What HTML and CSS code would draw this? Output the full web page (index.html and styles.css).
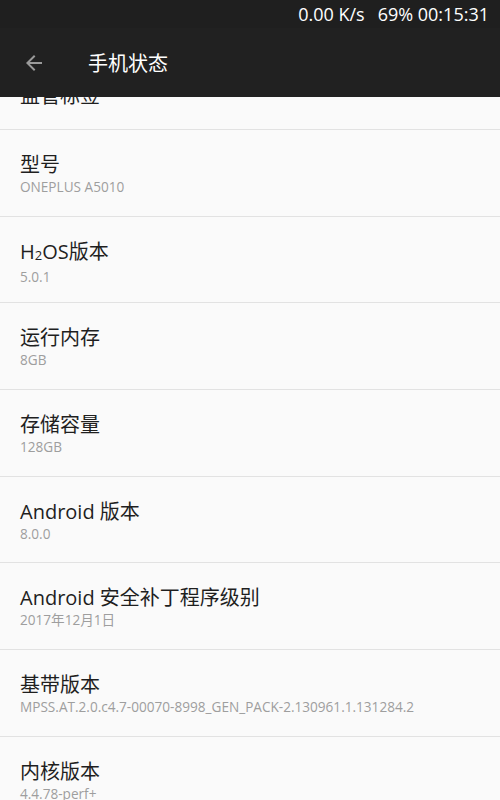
FILE: index.html
```html
<!DOCTYPE html>
<html lang="zh-CN">
<head>
    <meta charset="UTF-8">
    <meta name="viewport" content="width=device-width, initial-scale=1.0">
    <title>手机状态</title>
    <link rel="stylesheet" href="styles.css">
</head>
<body>
    <!-- Barra de estado -->
    <div class="barra-estado">
        <span class="velocidad">0.00 K/s</span>
        <span>69% 00:15:31</span>
    </div>

    <!-- Barra de título -->
    <div class="barra-titulo">
        <svg class="icono-atras" viewBox="0 0 24 24" width="24" height="24">
            <path d="M20 11H7.83l5.59-5.59L12 4l-8 8 8 8 1.41-1.41L7.83 13H20v-2z"/>
        </svg>
        <h1 class="titulo">手机状态</h1>
    </div>

    <!-- Lista de información -->
    <div class="lista">
        <div class="fila fila-cortada">
            <div class="fila-titulo">监管标签</div>
        </div>
        <div class="fila">
            <div class="fila-titulo">型号</div>
            <div class="fila-valor">ONEPLUS A5010</div>
        </div>
        <div class="fila">
            <div class="fila-titulo">H<span class="sub">2</span>OS版本</div>
            <div class="fila-valor">5.0.1</div>
        </div>
        <div class="fila">
            <div class="fila-titulo">运行内存</div>
            <div class="fila-valor">8GB</div>
        </div>
        <div class="fila">
            <div class="fila-titulo">存储容量</div>
            <div class="fila-valor">128GB</div>
        </div>
        <div class="fila">
            <div class="fila-titulo">Android 版本</div>
            <div class="fila-valor">8.0.0</div>
        </div>
        <div class="fila">
            <div class="fila-titulo">Android 安全补丁程序级别</div>
            <div class="fila-valor">2017年12月1日</div>
        </div>
        <div class="fila">
            <div class="fila-titulo">基带版本</div>
            <div class="fila-valor">MPSS.AT.2.0.c4.7-00070-8998_GEN_PACK-2.130961.1.131284.2</div>
        </div>
        <div class="fila">
            <div class="fila-titulo">内核版本</div>
            <div class="fila-valor">4.4.78-perf+</div>
        </div>
    </div>
</body>
</html>
```

FILE: styles.css
```css
body {
    margin: 0;
    width: 500px;
    height: 800px;
    overflow: hidden;
    font-family: 'Open Sans', 'Noto Sans CJK SC', sans-serif;
    background-color: #fafafa;
}

/* Barra de estado */
.barra-estado {
    height: 28px;
    display: flex;
    justify-content: flex-end;
    align-items: center;
    padding-right: 11px;
    background-color: #1f1f1f;
    color: #fff;
    font-size: 18px;
}
.velocidad {
    margin-right: 13px;
}

/* Barra de título */
.barra-titulo {
    height: 69px;
    display: flex;
    align-items: center;
    padding-left: 22px;
    background-color: #212121;
}
.icono-atras {
    fill: #9a9a9a;
}
.titulo {
    margin: 0 0 0 42px;
    font-size: 20px;
    font-weight: normal;
    color: #fff;
}

/* Lista */
.lista {
    overflow: hidden;
}
.fila {
    box-sizing: border-box;
    height: 86.67px;
    padding: 22px 20px 0;
    border-bottom: 1px solid #e2e2e2;
    overflow: hidden;
}
.fila-cortada {
    height: 33px;
    padding-top: 0;
}
.fila-cortada .fila-titulo {
    margin-top: -14px;
}
.fila-titulo {
    font-size: 20px;
    line-height: 26px;
    color: #1f1f1f;
    white-space: nowrap;
}
.sub {
    font-size: 13px;
    vertical-align: -1px;
}
.fila-valor {
    font-size: 13.6px;
    line-height: 18px;
    color: #9e9e9e;
    white-space: nowrap;
}
```
